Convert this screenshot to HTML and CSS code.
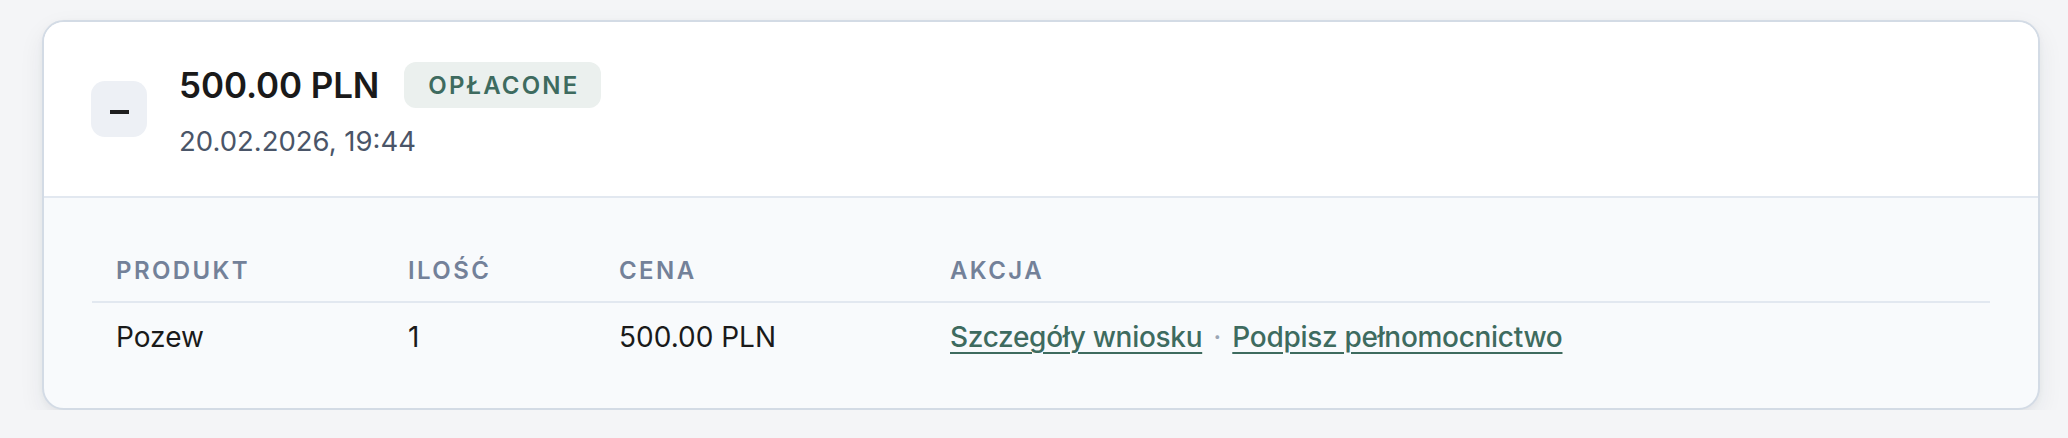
FILE: index.html
```html
<!DOCTYPE html>
<html lang="pl">
<head>
<meta charset="utf-8">
<title>Zamówienie</title>
<link rel="stylesheet" href="styles.css">
</head>
<body>
<div class="page">
  <section class="card">
    <header class="card-head">
      <button class="toggle" aria-label="Zwiń"><span class="minus"></span></button>
      <div class="summary">
        <div class="title-row">
          <h2 class="amount">500.00 PLN</h2>
          <span class="badge">Opłacone</span>
        </div>
        <div class="date">20.02.2026, 19:44</div>
      </div>
    </header>
    <div class="card-body">
      <table class="items">
        <colgroup>
          <col class="c1"><col class="c2"><col class="c3"><col class="c4">
        </colgroup>
        <thead>
          <tr><th>Produkt</th><th>Ilość</th><th>Cena</th><th>Akcja</th></tr>
        </thead>
        <tbody>
          <tr>
            <td>Pozew</td>
            <td>1</td>
            <td>500.00 PLN</td>
            <td><a href="#" class="link">Szczegóły wniosku</a><span class="sep">·</span><a href="#" class="link">Podpisz pełnomocnictwo</a></td>
          </tr>
        </tbody>
      </table>
    </div>
  </section>
</div>
</body>
</html>
```

FILE: styles.css
```css
* { box-sizing: border-box; }
html, body { margin: 0; padding: 0; }
body {
  background: #f4f5f7;
  font-family: Inter, "Noto Sans", "Liberation Sans", sans-serif;
  color: #1a1a1a;
}
.page {
  padding: 20px 28px 0 42px;
}
.card {
  border: 2px solid #d3dbe5;
  border-radius: 22px;
  overflow: hidden;
  background: #f8fafc;
  box-shadow: 0 10px 26px rgba(30, 41, 59, 0.07), 0 2px 6px rgba(30, 41, 59, 0.04);
}
.card-head {
  background: #ffffff;
  display: flex;
  align-items: center;
  gap: 32px;
  padding: 35px 48px 35px 47px;
  border-bottom: 2px solid #e2e8f0;
}
.toggle {
  width: 56px;
  height: 56px;
  border: 0;
  border-radius: 14px;
  background: #edf0f5;
  display: flex;
  align-items: center;
  justify-content: center;
  padding: 0;
}
.minus {
  display: block;
  width: 19px;
  height: 4px;
  background: #1e1e1e;
  margin-top: 6px;
}
.summary {
  display: flex;
  flex-direction: column;
  gap: 8px;
}
.title-row {
  display: flex;
  align-items: center;
  gap: 25px;
  height: 56px;
}
.amount {
  margin: 0;
  font-size: 35px;
  font-weight: 600;
  line-height: 56px;
  color: #1a1a1a;
  letter-spacing: -0.1px;
}
.badge {
  height: 46px;
  display: inline-flex;
  align-items: center;
  padding: 0 22px 0 24px;
  border-radius: 12px;
  background: #ebf0ee;
  color: #3e6b5f;
  font-size: 24px;
  font-weight: 600;
  letter-spacing: 0.09em;
  text-transform: uppercase;
}
.date {
  font-size: 27.5px;
  line-height: 40px;
  color: #4a5568;
}
.card-body {
  padding: 33px 48px 37px 48px;
}
.items {
  width: 100%;
  table-layout: fixed;
  border-collapse: collapse;
}
.c1 { width: 292px; }
.c2 { width: 211px; }
.c3 { width: 331px; }
.items th {
  text-align: left;
  font-size: 24px;
  line-height: 32px;
  font-weight: 600;
  letter-spacing: 0.1em;
  text-transform: uppercase;
  color: #738199;
  padding: 24px 24px 14px;
  border-bottom: 2px solid #e2e8f0;
}
.items td {
  font-size: 28px;
  line-height: 40px;
  color: #1a1a1a;
  padding: 14px 24px 14px;
}
.link {
  color: #3e6b5f;
  font-weight: 500;
  letter-spacing: -0.3px;
  text-decoration: underline;
  text-decoration-thickness: 2px;
  text-underline-offset: 5px;
}
.sep {
  color: #9aa5b4;
  margin: 0 11px;
}
```
